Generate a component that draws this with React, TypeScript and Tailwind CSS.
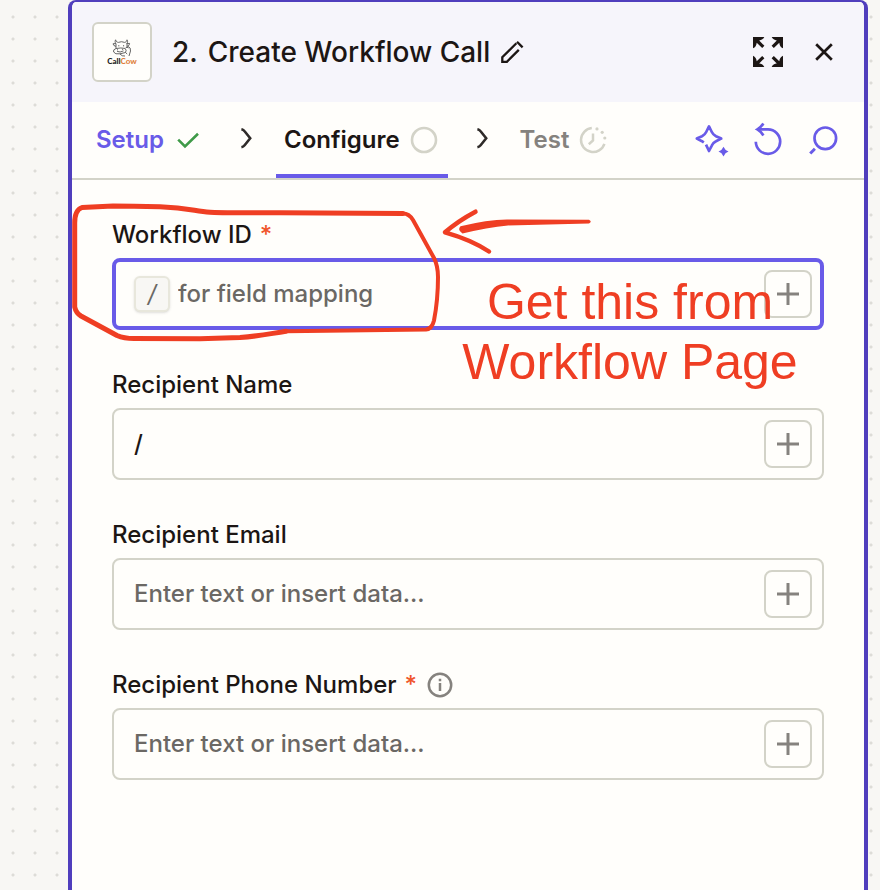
import type { ReactNode } from 'react';

type Field = {
  id: string;
  label: string;
  required?: boolean;
  info?: boolean;
  active?: boolean;
  value?: string;
  placeholder?: string;
};

const fields: Field[] = [
  {
    id: 'workflow-id',
    label: 'Workflow ID',
    required: true,
    active: true,
    placeholder: 'for field mapping',
  },
  { id: 'recipient-name', label: 'Recipient Name', value: '/' },
  {
    id: 'recipient-email',
    label: 'Recipient Email',
    placeholder: 'Enter text or insert data...',
  },
  {
    id: 'recipient-phone',
    label: 'Recipient Phone Number',
    required: true,
    info: true,
    placeholder: 'Enter text or insert data...',
  },
];

function IconButton({ label, children }: { label: string; children: ReactNode }) {
  return (
    <button aria-label={label} className="flex h-10 w-10 items-center justify-center" type="button">
      {children}
    </button>
  );
}

function CowLogo() {
  return (
    <div className="flex h-[60px] w-[60px] shrink-0 flex-col items-center justify-center rounded-md border-2 border-[#d3d3c8] bg-[#fffefb]">
      <svg className="h-[18px] w-5" fill="none" stroke="#555" strokeWidth="0.9" viewBox="0 0 20 18">
        <path d="M4 4.5C2.8 3.6 3 2 3.6.8 4.2 2.8 5 3.2 6.4 3.4M12.6 3.4C14 3.2 14.6 2.4 15 .8c.8 1.2.9 2.8-.4 3.8" />
        <path d="M6.4 3.4Q9.5 2 12.6 3.4M4 4.5 1 4.8Q1.4 7 4 7.4M14.6 4.6l3-.2Q17.4 7 15 7.4" />
        <path d="M4 5v4.5M15 5v3M4 9.5Q.8 10.5 1.6 13 3 15.6 8 14.8l5.5-1.3Q15 11 13 9.4 9 8.5 4 9.5Z" />
        <path d="M5 12.3q3 1.6 6.5-.4M16 7.4q3 1 2.5 4.6L17 17M13.5 9q1.5-1.6 3 0M8 15q2 2.5 5 2M13.5 13.5l1.7 1.5" />
        <path d="M6.8 6.3v1M11.6 6.3v1M5 10.8h.8M10.3 10.4h.8" stroke="#222" />
      </svg>
      <span className="font-[Lato,sans-serif] text-[8px] leading-[8px] font-black text-[#222]">
        Call<span className="text-[#e0803c]">Cow</span>
      </span>
    </div>
  );
}

function PencilIcon() {
  return (
    <svg className="h-6 w-6" fill="none" stroke="#1c1614" strokeWidth="2.3" viewBox="0 0 24 24">
      <path d="M16.4 3.2 2.3 17.2v4.6h4.6L18.8 9.9" />
      <path d="m17 1.8 5.6 5.6" />
    </svg>
  );
}

function ExpandIcon() {
  const corner = 'M0 0H11.3C10.5 2 8.5 3.2 6.2 3.4L11.4 8.8 9.2 11 3.7 5.7C3.5 8.2 2.3 10.4 0 11.3Z';
  return (
    <svg className="h-[30px] w-[30px]" fill="#1c1614" viewBox="0 0 30 30">
      <path d={corner} />
      <path d={corner} transform="translate(30 0) scale(-1 1)" />
      <path d={corner} transform="translate(0 30) scale(1 -1)" />
      <path d={corner} transform="translate(30 30) scale(-1 -1)" />
    </svg>
  );
}

function CloseIcon() {
  return (
    <svg className="h-5 w-5" fill="none" stroke="#1c1614" strokeWidth="2.7" viewBox="0 0 20 20">
      <path d="m2.2 2.2 15.6 15.6M17.8 2.2 2.2 17.8" />
    </svg>
  );
}

function CheckIcon() {
  return (
    <svg className="h-6 w-6" fill="none" stroke="#3f9a48" strokeWidth="2.6" viewBox="0 0 24 24">
      <path d="m2.2 11.6 6.8 6.8L22 5.8" />
    </svg>
  );
}

function ChevronIcon() {
  return (
    <svg className="h-6 w-6 shrink-0" fill="none" stroke="#2f2b29" strokeWidth="2.6" viewBox="0 0 24 24">
      <path d="M7.4 1.2Q9.4 1.6 10.6 3.2L16.2 10.2 10.6 17.2Q9.4 18.800 7.4 19.2" />
    </svg>
  );
}

function PendingIcon() {
  return (
    <svg className="h-7 w-7" fill="none" stroke="#d3d3c8" strokeWidth="2.6" viewBox="0 0 28 28">
      <circle cx="14" cy="14" r="12" />
    </svg>
  );
}

function ClockIcon() {
  return (
    <svg className="h-7 w-7" fill="none" stroke="#d3d3c8" strokeWidth="2.5" viewBox="0 0 28 28">
      <path d="M12.8 2.1A12 12 0 1 0 25.4 17.8" />
      <path d="M14 7.5v7L9.8 18.2" />
      <g fill="#d3d3c8" stroke="none">
        <circle cx="18" cy="2.9" r="1.6" />
        <circle cx="23.2" cy="6.3" r="1.6" />
        <circle cx="25.8" cy="12" r="1.6" />
      </g>
    </svg>
  );
}

function SparkleIcon() {
  return (
    <svg className="h-9 w-9" fill="none" stroke="#695be8" strokeWidth="2.7" viewBox="0 0 36 36">
      <path
        d="M9.8 20.5 8 19.2 2.8 16.6 8 14.2Q11 12.6 12.2 10L15 4.4 17.8 10Q19 12.600 22 14.2L27.200 16.6 22 19.2Q19 20.6 17.8 23.600L15 29 12 22.600"
        strokeLinejoin="round"
      />
      <path
        d="M29.5 24.8Q31 28.4 34.5 29.600 31 30.800 29.5 34.400 28 30.800 24.5 29.600 28 28.400 29.5 24.800Z"
        fill="#695be8"
        stroke="none"
      />
    </svg>
  );
}

function UndoIcon() {
  return (
    <svg className="h-9 w-9" fill="none" stroke="#695be8" strokeWidth="2.7" viewBox="0 0 36 36">
      <path d="M5.8 19.800A12.200 12.200 0 1 0 18 7.400H8" />
      <path d="M13.400 1.600Q10.800 5.400 7.400 7.400q3.400 2 6 6" />
    </svg>
  );
}

function SearchIcon() {
  return (
    <svg className="h-9 w-9" fill="none" stroke="#695be8" strokeWidth="2.7" viewBox="0 0 36 36">
      <circle cx="19.3" cy="16.3" r="10.8" />
      <path d="m8.9 26.8-4.7 4.7" strokeWidth="3" />
    </svg>
  );
}

function InfoIcon() {
  return (
    <svg className="h-[26px] w-[26px]" fill="none" stroke="#85827e" strokeWidth="2.5" viewBox="0 0 26 26">
      <circle cx="13" cy="13" r="11.2" />
      <path d="M13 11v8M13 6.800v2.400" />
    </svg>
  );
}

function PlusIcon() {
  return (
    <svg className="h-[22px] w-[22px]" fill="none" stroke="#85827e" strokeWidth="3" viewBox="0 0 22 22">
      <path d="M11 0v22M0 11h22" />
    </svg>
  );
}

function FieldRow({ field }: { field: Field }) {
  const { id, label, required, info, active, value, placeholder } = field;
  return (
    <div>
      <div className="flex h-12 items-center pt-[2px]">
        <label className="text-2xl font-medium text-[#1c1614]" htmlFor={id}>
          {label}
          {required && <span className="ml-2 text-[#f0562b]">*</span>}
        </label>
        {info && (
          <button aria-label="About this field" className="ml-[10px]" type="button">
            <InfoIcon />
          </button>
        )}
      </div>
      <div
        className={
          active
            ? 'flex h-[72px] items-center rounded-lg border-4 border-[#695be8] pr-2 pl-[18px]'
            : 'flex h-[72px] items-center rounded-lg border-2 border-[#d3d3c8] pr-[10px] pl-5'
        }
      >
        {active && (
          <kbd className="mr-2 flex h-9 w-9 shrink-0 items-center justify-center rounded-md border-2 border-[#e8e7dc] bg-[#f8f7f4] font-[Inter,sans-serif] text-2xl text-[#6b6864] italic shadow-sm">
            /
          </kbd>
        )}
        <input
          className="min-w-0 flex-1 bg-transparent text-2xl font-medium text-[#1c1614] outline-none placeholder:text-[#6b6864]"
          defaultValue={value}
          id={id}
          placeholder={placeholder}
          type="text"
        />
        <button
          aria-label={`Insert data into ${label}`}
          className="flex h-12 w-12 shrink-0 items-center justify-center rounded-lg border-2 border-[#d3d3c8]"
          type="button"
        >
          <PlusIcon />
        </button>
      </div>
    </div>
  );
}

function Annotation() {
  return (
    <div className="pointer-events-none absolute top-0 left-0 text-[#ef3e23]">
      <svg
        className="h-[180px] w-[540px]"
        fill="none"
        stroke="currentColor"
        strokeLinecap="round"
        strokeLinejoin="round"
        viewBox="0 0 540 180"
      >
        <path
          d="M331 33.5 208 32.7Q146 33 138 32.300C122 31 117 28 88 26.700 60 26 45 26 41 26L10 27.500Q2.700 30 2.700 43V127Q4 133 9 136L45 155.500Q52 158.500 62 158.500L128 158.700 168 157.500C188 156 196 154 214 151.300"
          strokeWidth="5"
        />
        <path
          d="M214 151.300 354 149.500Q360 149 362 140.500 366 120 366 97 366 86 362 78L341 40Q337 33.500 331 33.500"
          strokeWidth="4"
        />
        <path d="M403.500 31.700Q386 41 373 52.300 400 60 417 71.500" strokeWidth="4.500" />
        <path
          d="M388.500 46.300Q415 39.500 435 39.400L517 39.700Q520.500 41.500 517 43.600L436 45.400Q415 47.500 390.500 53.400 385 50 388.500 46.300Z"
          fill="currentColor"
          stroke="none"
        />
      </svg>
      <p className="absolute top-[92px] left-[376px] w-[364px] text-center font-['Liberation_Sans',Arial,sans-serif] text-[50px] leading-[60px]">
        Get this from Workflow Page
      </p>
    </div>
  );
}

export default function App() {
  return (
    <div className="flex min-h-screen bg-[#f8f7f4] bg-[radial-gradient(circle_at_13px_17px,#dddcd7_1px,transparent_2px)] bg-[size:22px_22px] pr-3 pl-[68px] font-[Inter,sans-serif]">
      <main className="flex min-w-0 flex-1 flex-col overflow-hidden rounded-t-lg border-x-4 border-t-2 border-[#503ebd] bg-[#fffefb]">
        <header className="flex h-[100px] items-center justify-between bg-[#f6f5fb] px-5">
          <div className="flex items-center">
            <CowLogo />
            <h1 className="ml-5 flex gap-[10px] text-[28px] font-medium text-[#1c1614]">
              <span>2.</span>
              <span>Create Workflow Call</span>
            </h1>
            <button aria-label="Rename step" className="ml-[10px]" type="button">
              <PencilIcon />
            </button>
          </div>
          <div className="flex items-center gap-4">
            <IconButton label="Expand">
              <ExpandIcon />
            </IconButton>
            <IconButton label="Close">
              <CloseIcon />
            </IconButton>
          </div>
        </header>

        <nav className="flex h-[78px] items-stretch justify-between border-b-2 border-[#d3d3c8] pr-5 pl-4 text-2xl font-semibold">
          <div className="flex items-stretch">
            <button className="flex items-center gap-3 px-2 text-[#695be8]" type="button">
              Setup
              <CheckIcon />
            </button>
            <span className="flex w-[68px] items-center justify-center pl-2">
              <ChevronIcon />
            </span>
            <button
              className="flex items-center gap-[10px] border-b-4 border-[#695be8] pt-1 pr-[10px] pl-2 text-[#1c1614]"
              type="button"
            >
              Configure
              <PendingIcon />
            </button>
            <span className="flex w-16 items-center justify-center pl-1">
              <ChevronIcon />
            </span>
            <button className="flex items-center gap-[10px] px-2 text-[#85827e]" type="button">
              Test
              <ClockIcon />
            </button>
          </div>
          <div className="flex items-center gap-4">
            <IconButton label="AI assist">
              <SparkleIcon />
            </IconButton>
            <IconButton label="Undo">
              <UndoIcon />
            </IconButton>
            <IconButton label="Search">
              <SearchIcon />
            </IconButton>
          </div>
        </nav>

        <form className="relative flex flex-1 flex-col gap-[30px] px-10 pt-[30px] pb-10">
          {fields.map((field) => (
            <FieldRow field={field} key={field.id} />
          ))}
          <Annotation />
        </form>
      </main>
    </div>
  );
}
